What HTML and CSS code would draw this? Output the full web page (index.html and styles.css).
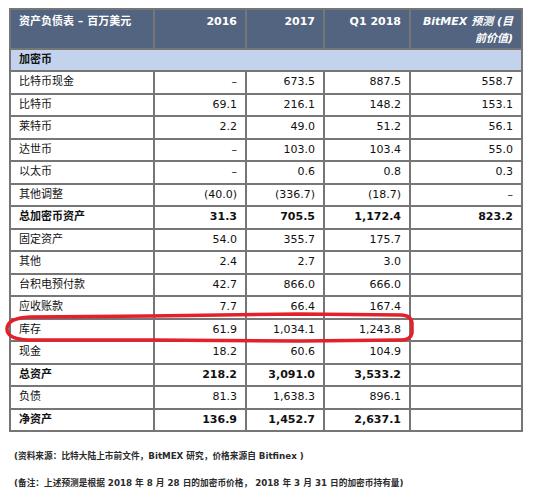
FILE: index.html
```html
<!DOCTYPE html>
<html lang="zh">
<head>
    <meta charset="UTF-8">
    <title>资产负债表</title>
    <link rel="stylesheet" href="styles.css">
</head>
<body>
    <div class="sheet">
        <table class="balance">
            <colgroup>
                <col class="c-name">
                <col class="c-2016">
                <col class="c-2017">
                <col class="c-q1">
                <col class="c-est">
            </colgroup>
            <thead>
                <tr>
                    <th class="name">资产负债表 – 百万美元</th>
                    <th>2016</th>
                    <th>2017</th>
                    <th>Q1 2018</th>
                    <th class="est">BitMEX 预测 (目前价值)</th>
                </tr>
            </thead>
            <tbody>
                <tr class="section"><td colspan="5">加密币</td></tr>
                <tr><td>比特币现金</td><td>–</td><td>673.5</td><td>887.5</td><td>558.7</td></tr>
                <tr><td>比特币</td><td>69.1</td><td>216.1</td><td>148.2</td><td>153.1</td></tr>
                <tr><td>莱特币</td><td>2.2</td><td>49.0</td><td>51.2</td><td>56.1</td></tr>
                <tr><td>达世币</td><td>–</td><td>103.0</td><td>103.4</td><td>55.0</td></tr>
                <tr><td>以太币</td><td>–</td><td>0.6</td><td>0.8</td><td>0.3</td></tr>
                <tr><td>其他调整</td><td>(40.0)</td><td>(336.7)</td><td>(18.7)</td><td>–</td></tr>
                <tr class="total"><td>总加密币资产</td><td>31.3</td><td>705.5</td><td>1,172.4</td><td>823.2</td></tr>
                <tr><td>固定资产</td><td>54.0</td><td>355.7</td><td>175.7</td><td></td></tr>
                <tr><td>其他</td><td>2.4</td><td>2.7</td><td>3.0</td><td></td></tr>
                <tr><td>台积电预付款</td><td>42.7</td><td>866.0</td><td>666.0</td><td></td></tr>
                <tr><td>应收账款</td><td>7.7</td><td>66.4</td><td>167.4</td><td></td></tr>
                <tr><td>库存</td><td>61.9</td><td>1,034.1</td><td>1,243.8</td><td></td></tr>
                <tr><td>现金</td><td>18.2</td><td>60.6</td><td>104.9</td><td></td></tr>
                <tr class="total"><td>总资产</td><td>218.2</td><td>3,091.0</td><td>3,533.2</td><td></td></tr>
                <tr><td>负债</td><td>81.3</td><td>1,638.3</td><td>896.1</td><td></td></tr>
                <tr class="total"><td>净资产</td><td>136.9</td><td>1,452.7</td><td>2,637.1</td><td></td></tr>
            </tbody>
        </table>

        <!-- hand-drawn highlight around the inventory row -->
        <svg class="mark" width="535" height="496" viewBox="0 0 535 496">
            <path d="M150 316 L300 314 L402 315 Q412 316 412 324 L412 333 Q411 340 400 340 L300 341 L150 340 L28 340 Q7 339 7 329 Q7 318 30 317 Z" fill="none" stroke="#e4202a" stroke-width="3.5" stroke-linejoin="round"/>
        </svg>

        <p class="note">(资料来源：比特大陆上市前文件，BitMEX 研究，价格来源自 Bitfinex )</p>
        <p class="note">(备注：上述预测是根据 2018 年 8 月 28 日的加密币价格， 2018 年 3 月 31 日的加密币持有量)</p>
    </div>
</body>
</html>
```

FILE: styles.css
```css
body {
    margin: 0;
    background: #ffffff;
    font-family: "DejaVu Sans", Verdana, "Noto Sans CJK SC", sans-serif;
    color: #111111;
}
.sheet {
    position: relative;
    width: 535px;
    height: 496px;
    padding: 8px 0 0 9px;
    box-sizing: border-box;
}
.balance {
    border-collapse: collapse;
    table-layout: fixed;
    width: 512px;
    font-size: 11px;
}
.c-name { width: 144px; }
.c-2016 { width: 92px; }
.c-2017 { width: 78px; }
.c-q1 { width: 86px; }
.c-est { width: 112px; }

.balance th,
.balance td {
    border: 2px solid #767676;
    padding: 0 8px;
    text-align: right;
}
.balance th {
    background-color: #536480;
    color: #ffffff;
    font-weight: bold;
    vertical-align: top;
    line-height: 17px;
    padding-top: 3px;
    padding-bottom: 1px;
    height: 35px;
    box-sizing: border-box;
}
.balance th.name {
    text-align: left;
}
.balance th.est {
    font-style: italic;
}
.balance td {
    height: 20.5px;
    line-height: 14px;
}
.balance td:first-child {
    text-align: left;
}
.balance tr.section td {
    height: 20px;
    background-color: #c3d3ee;
    font-weight: bold;
    text-align: left;
}
.balance tr.total td {
    font-weight: bold;
}
.mark {
    position: absolute;
    left: 0;
    top: 0;
    pointer-events: none;
}
.note {
    margin: 18px 0 0 5px;
    font-size: 8.7px;
    font-weight: bold;
    color: #2b2b2b;
    line-height: 12px;
}
.note + .note {
    margin-top: 15px;
}
```
